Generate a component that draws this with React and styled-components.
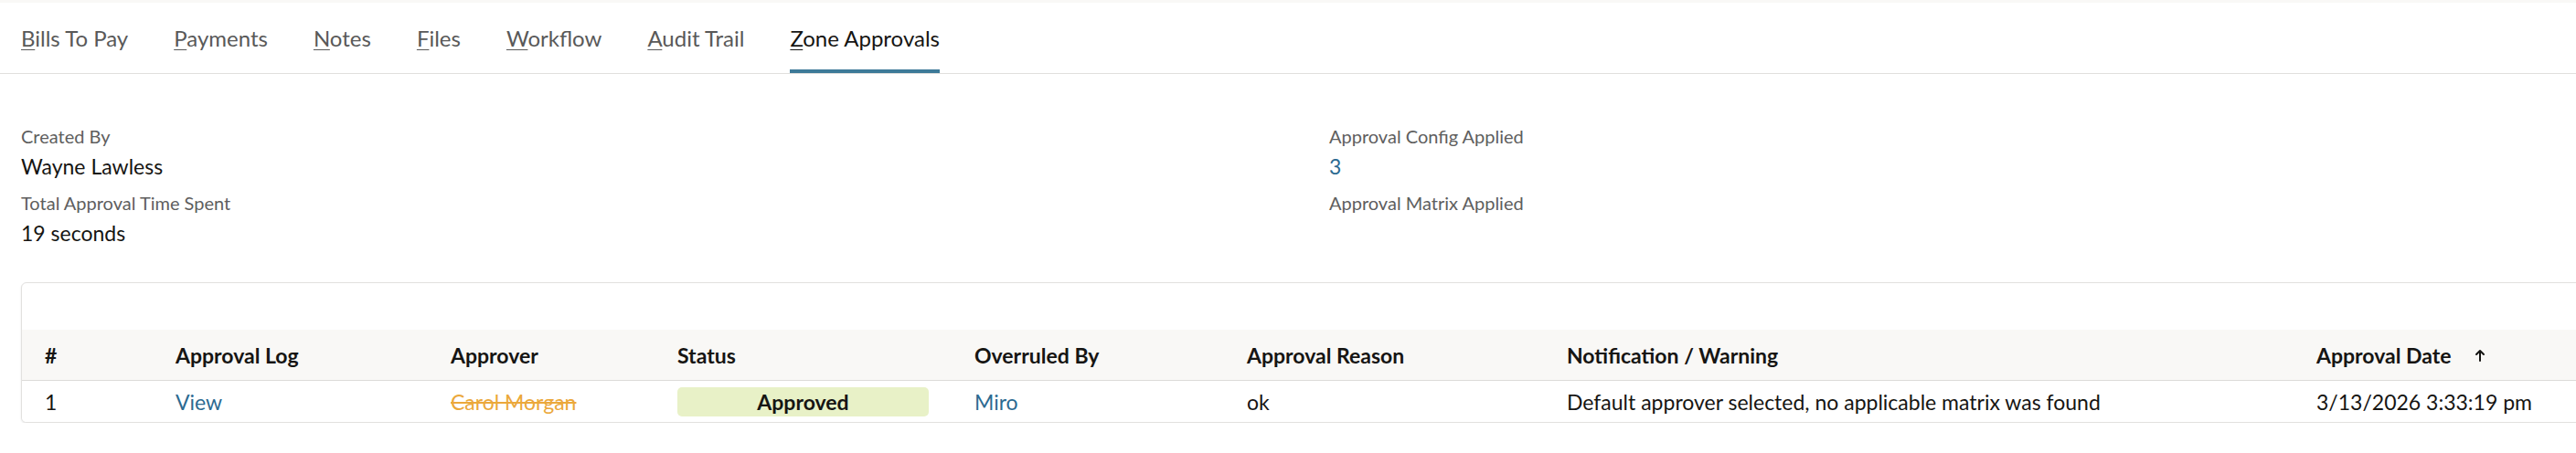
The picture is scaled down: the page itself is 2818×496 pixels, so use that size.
import React from "react";
import styled, { createGlobalStyle } from "styled-components";

const GlobalStyle = createGlobalStyle`
  html, body {
    margin: 0;
    padding: 0;
    background: #ffffff;
    overflow: hidden;
  }
  body {
    font-family: Lato, "Noto Sans", "Liberation Sans", sans-serif;
    color: #161513;
  }
`;

const tabs = [
  { label: "Bills To Pay" },
  { label: "Payments" },
  { label: "Notes" },
  { label: "Files" },
  { label: "Workflow" },
  { label: "Audit Trail" },
  { label: "Zone Approvals", active: true },
];

const columns = ["#", "Approval Log", "Approver", "Status", "Overruled By", "Approval Reason", "Notification / Warning", "Approval Date"];

const rows = [
  {
    n: "1",
    log: "View",
    approver: "Carol Morgan",
    status: "Approved",
    overruledBy: "Miro",
    reason: "ok",
    note: "Default approver selected, no applicable matrix was found",
    date: "3/13/2026 3:33:19 pm",
  },
];

const Page = styled.div`
  width: 100%;
`;

const TopStrip = styled.div`
  height: 3px;
  background: #f9f8f6;
`;

const TabBar = styled.nav`
  display: flex;
  gap: 50px;
  height: 77px;
  padding-left: 23px;
  border-bottom: 1px solid #e0dfdd;
`;

const Tab = styled.div`
  position: relative;
  display: flex;
  align-items: center;
  font-size: 24px;
  color: ${(p) => (p.active ? "#161513" : "#595959")};
  cursor: pointer;
  white-space: nowrap;

  u {
    text-decoration-thickness: 1px;
    text-underline-offset: 3px;
  }

  &::after {
    content: "";
    display: ${(p) => (p.active ? "block" : "none")};
    position: absolute;
    left: 0;
    right: 0;
    bottom: 0;
    height: 4px;
    background: #3d7a98;
  }
`;

const InfoGrid = styled.section`
  display: grid;
  grid-template-columns: 1431px 1fr;
  padding: 55px 23px 0;
`;

const InfoColumn = styled.div`
  display: flex;
  flex-direction: column;
  gap: 11px;
`;

const Field = styled.div`
  display: flex;
  flex-direction: column;
  gap: 4px;
`;

const FieldLabel = styled.div`
  font-size: 20px;
  line-height: 26px;
  color: #5e5e5e;
`;

const FieldValue = styled.div`
  font-size: 23px;
  line-height: 32px;
  min-height: 32px;
  color: ${(p) => (p.link ? "#2c6a91" : "#161513")};
`;

const Card = styled.div`
  margin: 38px -6px 0 23px;
  border: 1px solid #e2e1df;
  border-radius: 6px;
  box-shadow: 0 1px 2px rgba(0, 0, 0, 0.1);
  background: #fff;
  overflow: hidden;
`;

const CardToolbar = styled.div`
  height: 51px;
`;

const GridRow = styled.div`
  display: grid;
  grid-template-columns: 143px 301px 248px 325px 298px 350px 820px 1fr;
  align-items: center;
  height: ${(p) => (p.head ? "55px" : "45px")};
  background: ${(p) => (p.head ? "#f9f8f6" : "#fff")};
  border-bottom: ${(p) => (p.head ? "1px solid #dcdbd9" : "none")};
`;

const Cell = styled.div`
  display: flex;
  align-items: center;
  gap: 26px;
  padding: 0 25px;
  font-size: 23px;
  font-weight: ${(p) => (p.head ? 700 : 400)};
  color: #161513;
  white-space: nowrap;
`;

const Link = styled.a`
  color: #2c6a91;
  text-decoration: none;
  cursor: pointer;
`;

const Struck = styled.span`
  color: #eba83b;
  text-decoration: line-through;
  text-decoration-thickness: 2px;
`;

const StatusPill = styled.div`
  flex: 1;
  height: 32px;
  display: flex;
  align-items: center;
  justify-content: center;
  border-radius: 5px;
  background: #e8f1c7;
  font-weight: 700;
  font-size: 23px;
`;

const SortArrow = () => (
  <svg width="12" height="14" viewBox="0 0 12 14" fill="none">
    <path d="M6 13V2M2 6l4-4 4 4" stroke="#161513" strokeWidth="2" strokeLinecap="round" strokeLinejoin="round" />
  </svg>
);

const App = () => {
  return (
    <Page>
      <GlobalStyle />
      <TopStrip />
      <TabBar>
        {tabs.map((t) => (
          <Tab key={t.label} active={t.active}>
            <span>
              <u>{t.label[0]}</u>
              {t.label.slice(1)}
            </span>
          </Tab>
        ))}
      </TabBar>

      <InfoGrid>
        <InfoColumn>
          <Field>
            <FieldLabel>Created By</FieldLabel>
            <FieldValue>Wayne Lawless</FieldValue>
          </Field>
          <Field>
            <FieldLabel>Total Approval Time Spent</FieldLabel>
            <FieldValue>19 seconds</FieldValue>
          </Field>
        </InfoColumn>
        <InfoColumn>
          <Field>
            <FieldLabel>Approval Config Applied</FieldLabel>
            <FieldValue link>3</FieldValue>
          </Field>
          <Field>
            <FieldLabel>Approval Matrix Applied</FieldLabel>
            <FieldValue />
          </Field>
        </InfoColumn>
      </InfoGrid>

      <Card>
        <CardToolbar />
        <GridRow head>
          {columns.map((c) => (
            <Cell head key={c}>
              {c}
              {c === "Approval Date" && <SortArrow />}
            </Cell>
          ))}
        </GridRow>
        {rows.map((r) => (
          <GridRow key={r.n}>
            <Cell>{r.n}</Cell>
            <Cell>
              <Link>{r.log}</Link>
            </Cell>
            <Cell>
              <Struck>{r.approver}</Struck>
            </Cell>
            <Cell>
              <StatusPill>{r.status}</StatusPill>
            </Cell>
            <Cell>
              <Link>{r.overruledBy}</Link>
            </Cell>
            <Cell>{r.reason}</Cell>
            <Cell>{r.note}</Cell>
            <Cell>{r.date}</Cell>
          </GridRow>
        ))}
      </Card>
    </Page>
  );
};

export default App;
